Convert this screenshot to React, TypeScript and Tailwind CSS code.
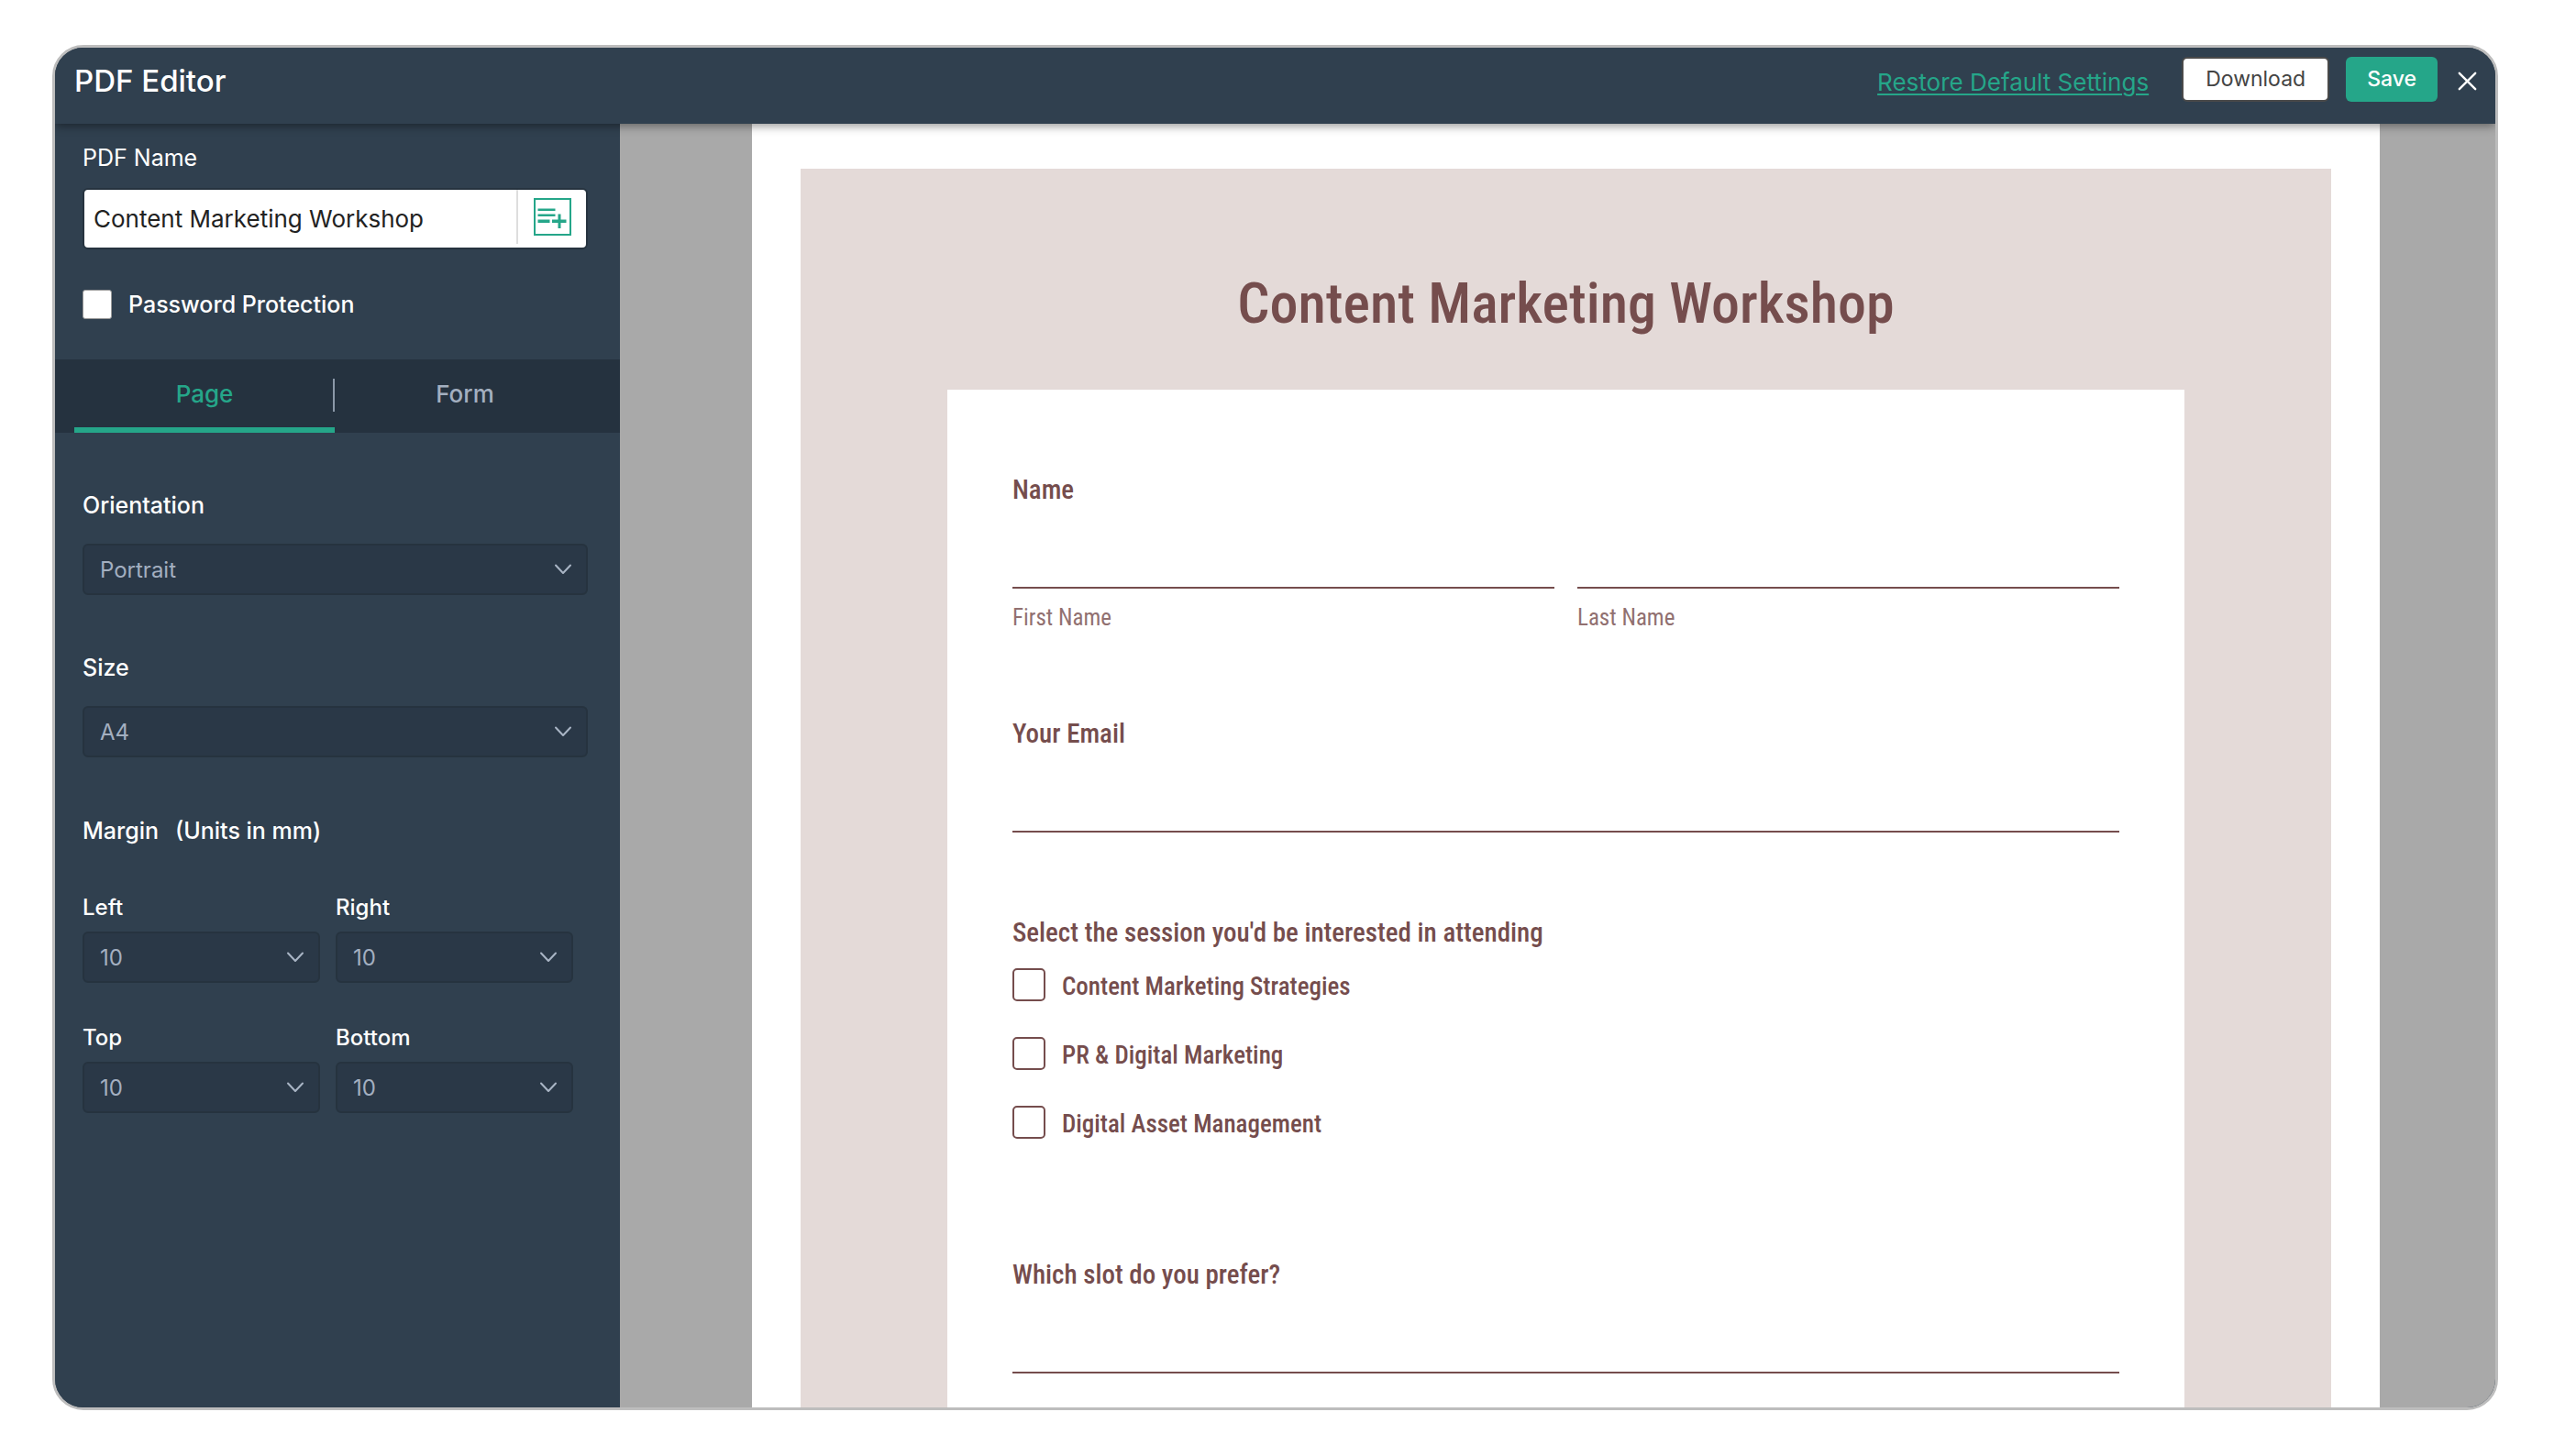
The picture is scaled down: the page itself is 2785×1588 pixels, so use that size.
import { useId, useState } from "react";

function Chevron() {
  return (
    <svg
      className="pointer-events-none absolute right-[17px] top-1/2 -translate-y-1/2"
      width="20"
      height="12"
      viewBox="0 0 20 12"
      fill="none"
      stroke="#a9b5c5"
      strokeWidth="2"
      strokeLinecap="round"
      strokeLinejoin="round"
      aria-hidden="true"
    >
      <path d="M2 1.5L10 10L18 1.5" />
    </svg>
  );
}

type PickerProps = {
  label: string;
  options: string[];
  compact?: boolean;
};

function Picker({ label, options, compact = false }: PickerProps) {
  const id = useId();
  return (
    <div className={compact ? "flex flex-col gap-2.5" : "flex flex-col gap-[26px]"}>
      <label
        htmlFor={id}
        className={
          compact
            ? "text-[24px] leading-8 font-medium text-white"
            : "text-[25px] leading-8 font-medium text-white"
        }
      >
        {label}
      </label>
      <div className="relative">
        <select
          id={id}
          className="h-14 w-full appearance-none rounded-md border-2 border-[#26333f] bg-[#2a3847] pt-0.5 pr-12 pl-[17px] text-[24px] text-[#a3afc0] outline-none"
        >
          {options.map((option) => (
            <option key={option}>{option}</option>
          ))}
        </select>
        <Chevron />
      </div>
    </div>
  );
}

function AddFieldIcon() {
  return (
    <svg width="41" height="41" viewBox="0 0 41 41" fill="#25a689" aria-hidden="true">
      <rect x="1" y="1" width="39" height="39" fill="none" stroke="#25a689" strokeWidth="2" />
      <rect x="4.5" y="11.5" width="19" height="2.5" />
      <rect x="4.5" y="17.5" width="19" height="2.5" />
      <rect x="4.5" y="23.5" width="13" height="3.5" />
      <rect x="20" y="23.5" width="15.5" height="3.5" />
      <rect x="26.5" y="17.5" width="3" height="15.5" />
    </svg>
  );
}

function Sidebar() {
  const [tab, setTab] = useState("Page");
  const [name, setName] = useState("Content Marketing Workshop");
  return (
    <aside className="w-[616px] shrink-0 bg-[#30404f]">
      <div className="pt-[21px] pr-[35px] pb-11 pl-[30px]">
        <label htmlFor="pdf-name" className="block text-[25px] leading-8 text-white">
          PDF Name
        </label>
        <div className="mt-[17px] flex h-[67px] rounded-md border-2 border-[#26333f] bg-white">
          <input
            id="pdf-name"
            value={name}
            onChange={(e) => setName(e.target.value)}
            className="min-w-0 flex-1 bg-transparent pl-[10px] text-[26px] text-[#222] outline-none"
          />
          <button
            type="button"
            aria-label="Insert field"
            className="mb-1 flex w-[76px] items-center justify-center border-l-2 border-[#dedede]"
          >
            <AddFieldIcon />
          </button>
        </div>
        <div className="mt-11 flex h-8 items-center gap-[18px]">
          <input
            id="password"
            type="checkbox"
            className="size-8 appearance-none rounded-[3px] border border-[#999] bg-white checked:bg-[#25a689]"
          />
          <label htmlFor="password" className="text-[25px] leading-8 font-medium text-white">
            Password Protection
          </label>
        </div>
      </div>

      <div role="tablist" className="flex h-20 bg-[#25323f] pr-[27px] pl-[21px]">
        {["Page", "Form"].map((item, i) => (
          <button
            key={item}
            role="tab"
            type="button"
            aria-selected={tab === item}
            onClick={() => setTab(item)}
            className={
              tab === item
                ? "relative flex-1 border-b-6 border-[#25a689] text-[26px] font-medium text-[#25a689]"
                : "relative flex-1 border-b-6 border-transparent text-[26px] font-medium text-[#a3afc0]"
            }
          >
            {item}
            {i === 0 && (
              <span className="absolute top-[21px] right-0 h-9 w-0.5 bg-[#8b98a8]" aria-hidden="true" />
            )}
          </button>
        ))}
      </div>

      <div className="flex flex-col gap-[63px] pt-[63px] pr-[35px] pl-[30px]">
        <Picker label="Orientation" options={["Portrait", "Landscape"]} />
        <Picker label="Size" options={["A4", "A5", "Letter"]} />
        <fieldset>
          <legend className="flex gap-[18px] pt-px text-[25px] leading-8 font-medium text-white">
            <span>Margin</span>
            <span>(Units in mm)</span>
          </legend>
          <div className="grid grid-cols-2 gap-x-[17px] gap-y-11 pt-[52px] pr-4">
            {["Left", "Right", "Top", "Bottom"].map((side) => (
              <Picker key={side} label={side} options={["10", "15", "20"]} compact />
            ))}
          </div>
        </fieldset>
      </div>
    </aside>
  );
}

function LineInput({ id }: { id: string }) {
  return (
    <input
      id={id}
      className="block h-[88px] w-full border-b-2 border-[#754d4d] bg-transparent text-[28px] text-[#754d4d] outline-none"
    />
  );
}

const heading = "block text-[29px] leading-10 font-medium text-[#754d4d]";

function FormPreview() {
  return (
    <div className="min-h-full bg-white px-[53px] pt-[49px] font-['Roboto_Condensed','Liberation_Sans',sans-serif]">
      <div className="min-h-full bg-[#e4dad8] px-40 pt-[107px]">
        <h2 className="text-center text-[62px] leading-20 font-medium text-[#754d4d]">
          Content Marketing Workshop
        </h2>
        <form className="mt-[54px] bg-white px-[71px] pt-[89px] pb-40">
          <fieldset>
            <legend className={heading}>Name</legend>
            <div className="grid grid-cols-2 gap-[25px]">
              {["First Name", "Last Name"].map((part) => (
                <div key={part} className="flex flex-col-reverse">
                  <label htmlFor={part} className="mt-4 text-[25px] leading-8 text-[#917070]">
                    {part}
                  </label>
                  <LineInput id={part} />
                </div>
              ))}
            </div>
          </fieldset>

          <div className="mt-[90px]">
            <label htmlFor="email" className={heading}>
              Your Email
            </label>
            <LineInput id="email" />
          </div>

          <fieldset className="mt-[89px]">
            <legend className={heading}>Select the session you'd be interested in attending</legend>
            <div className="flex flex-col gap-[35px] pt-[17px]">
              {["Content Marketing Strategies", "PR & Digital Marketing", "Digital Asset Management"].map(
                (session) => (
                  <label
                    key={session}
                    className="flex h-10 items-center gap-[18px] text-[27px] leading-9 font-medium text-[#754d4d]"
                  >
                    <input
                      type="checkbox"
                      className="size-9 appearance-none rounded-[5px] border-2 border-[#754d4d] bg-white checked:bg-[#754d4d]"
                    />
                    <span className="pt-1">{session}</span>
                  </label>
                ),
              )}
            </div>
          </fieldset>

          <div className="mt-[126px]">
            <label htmlFor="slot" className={heading}>
              Which slot do you prefer?
            </label>
            <LineInput id="slot" />
          </div>
        </form>
      </div>
    </div>
  );
}

function TopBar() {
  return (
    <header className="relative z-10 flex h-[83px] shrink-0 items-start bg-[#30404f] pt-2.5 pr-5 pl-[21px] shadow-[0_2px_10px_rgba(0,0,0,0.45)]">
      <h1 className="text-[33px] leading-[52px] font-medium text-white">PDF Editor</h1>
      <div className="ml-auto flex h-[49px] items-center">
        <a
          href="#restore"
          className="mt-1.5 mr-9 text-[26px] leading-8 text-[#25a689] underline decoration-2 underline-offset-3"
        >
          Restore Default Settings
        </a>
        <button
          type="button"
          className="mr-[18px] h-full rounded-md border-2 border-[#4a4a4a] bg-white px-6 text-[23px] text-[#444]"
        >
          Download
        </button>
        <button
          type="button"
          className="mr-[22px] h-full rounded-md bg-[#25a689] px-[23px] text-[23px] font-medium text-white"
        >
          Save
        </button>
        <button type="button" aria-label="Close" className="mt-1">
          <svg width="21" height="21" viewBox="0 0 21 21" stroke="#fff" strokeWidth="2.4" strokeLinecap="round" aria-hidden="true">
            <path d="M1.8 1.8L19.2 19.2M19.2 1.8L1.8 19.2" />
          </svg>
        </button>
      </div>
    </header>
  );
}

export default function App() {
  return (
    <div className="h-screen bg-white pt-[49px] pr-[61px] pb-[50px] pl-[57px] font-[Inter,sans-serif]">
      <div className="flex h-full flex-col overflow-hidden rounded-[34px] border-3 border-[#bdbdbd] bg-[#30404f]">
        <TopBar />
        <div className="flex min-h-0 flex-1">
          <Sidebar />
          <main className="min-w-0 flex-1 overflow-hidden bg-[#a9a9a9] pr-[126px] pl-36">
            <FormPreview />
          </main>
        </div>
      </div>
    </div>
  );
}
